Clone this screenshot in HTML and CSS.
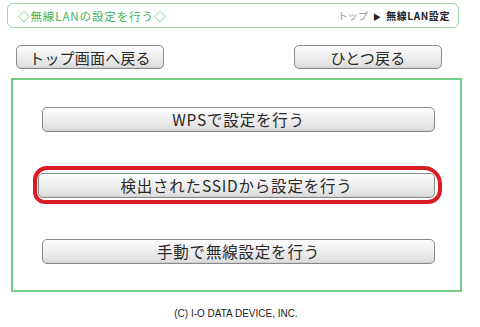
FILE: index.html
```html
<!DOCTYPE html>
<html lang="ja">
<head>
<meta charset="utf-8">
<title>無線LANの設定を行う</title>
<link rel="stylesheet" href="styles.css">
</head>
<body>
<div class="page">
  <div class="header">
    <span class="title">◇無線LANの設定を行う◇</span>
    <span class="crumb"><span class="crumb-top">トップ</span> <span class="arrow">▶</span> <span class="crumb-cur">無線LAN設定</span></span>
  </div>
  <div class="nav">
    <button class="btn nav-btn">トップ画面へ戻る</button>
    <button class="btn nav-btn">ひとつ戻る</button>
  </div>
  <div class="main">
    <button class="btn wide">WPSで設定を行う</button>
    <div class="marked">
      <button class="btn wide ssid">検出されたSSIDから設定を行う</button>
      <span class="ring"></span>
    </div>
    <button class="btn wide">手動で無線設定を行う</button>
  </div>
  <div class="footer">(C) I-O DATA DEVICE, INC.</div>
</div>
</body>
</html>
```
FILE: styles.css
```css
html, body {
  margin: 0;
  padding: 0;
  background: #ffffff;
}
body {
  font-family: "Noto Sans CJK JP", "Noto Sans", sans-serif;
  color: #222;
}
.page {
  width: 480px;
  height: 327px;
  padding-top: 3px;
  box-sizing: border-box;
}
.header {
  margin-left: 7px;
  width: 452px;
  height: 25px;
  box-sizing: border-box;
  border: 1px solid #9bd4a5;
  border-radius: 6px;
  display: flex;
  align-items: center;
  justify-content: space-between;
  padding: 0 8px 0 10px;
}
.title {
  font-size: 11.5px;
  color: #3db45a;
  letter-spacing: 0.9px;
}
.crumb {
  font-size: 10px;
  color: #222;
}
.crumb-top { color: #999; }
.arrow { font-size: 8px; margin: 0 3px; }
.crumb-cur { font-weight: bold; letter-spacing: 0.6px; }
.nav {
  display: flex;
  justify-content: space-between;
  margin: 17px 0 0 16px;
  width: 426px;
}
.btn {
  font-family: "Noto Sans CJK JP", "Noto Sans", sans-serif;
  color: #2a2a2a;
  border: 1px solid #8a8a8a;
  border-radius: 5px;
  background: linear-gradient(#fdfdfd 0%, #f0f0f0 45%, #dcdcdc 100%);
  box-shadow: inset 0 -1px 0 #cfcfcf;
  padding: 0;
  margin: 0;
  display: flex;
  align-items: center;
  justify-content: center;
  line-height: 1;
}
.nav-btn {
  width: 148px;
  height: 24px;
  font-size: 15px;
  letter-spacing: 0.2px;
}
.main {
  margin: 9px 0 0 11px;
  width: 451px;
  height: 214px;
  box-sizing: border-box;
  border: 2px solid #72cc82;
  display: flex;
  flex-direction: column;
  align-items: center;
  padding: 27px 0 0 0;
  gap: 41px;
}
.wide {
  width: 393px;
  height: 25px;
  font-size: 15.5px;
  letter-spacing: 0.8px;
  margin-left: 4px;
}
.marked {
  position: relative;
}
.ssid {
  width: 397px;
  margin-left: 0;
}
.ring {
  position: absolute;
  left: -5px;
  top: -7px;
  right: -7px;
  bottom: -6px;
  border: 4px solid #d91c24;
  border-radius: 14px 18px 14px 12px;
  pointer-events: none;
}
.footer {
  margin-top: 16px;
  text-align: center;
  font-family: "Liberation Sans", sans-serif;
  font-size: 10px;
  color: #222;
  width: 472px;
}
```
